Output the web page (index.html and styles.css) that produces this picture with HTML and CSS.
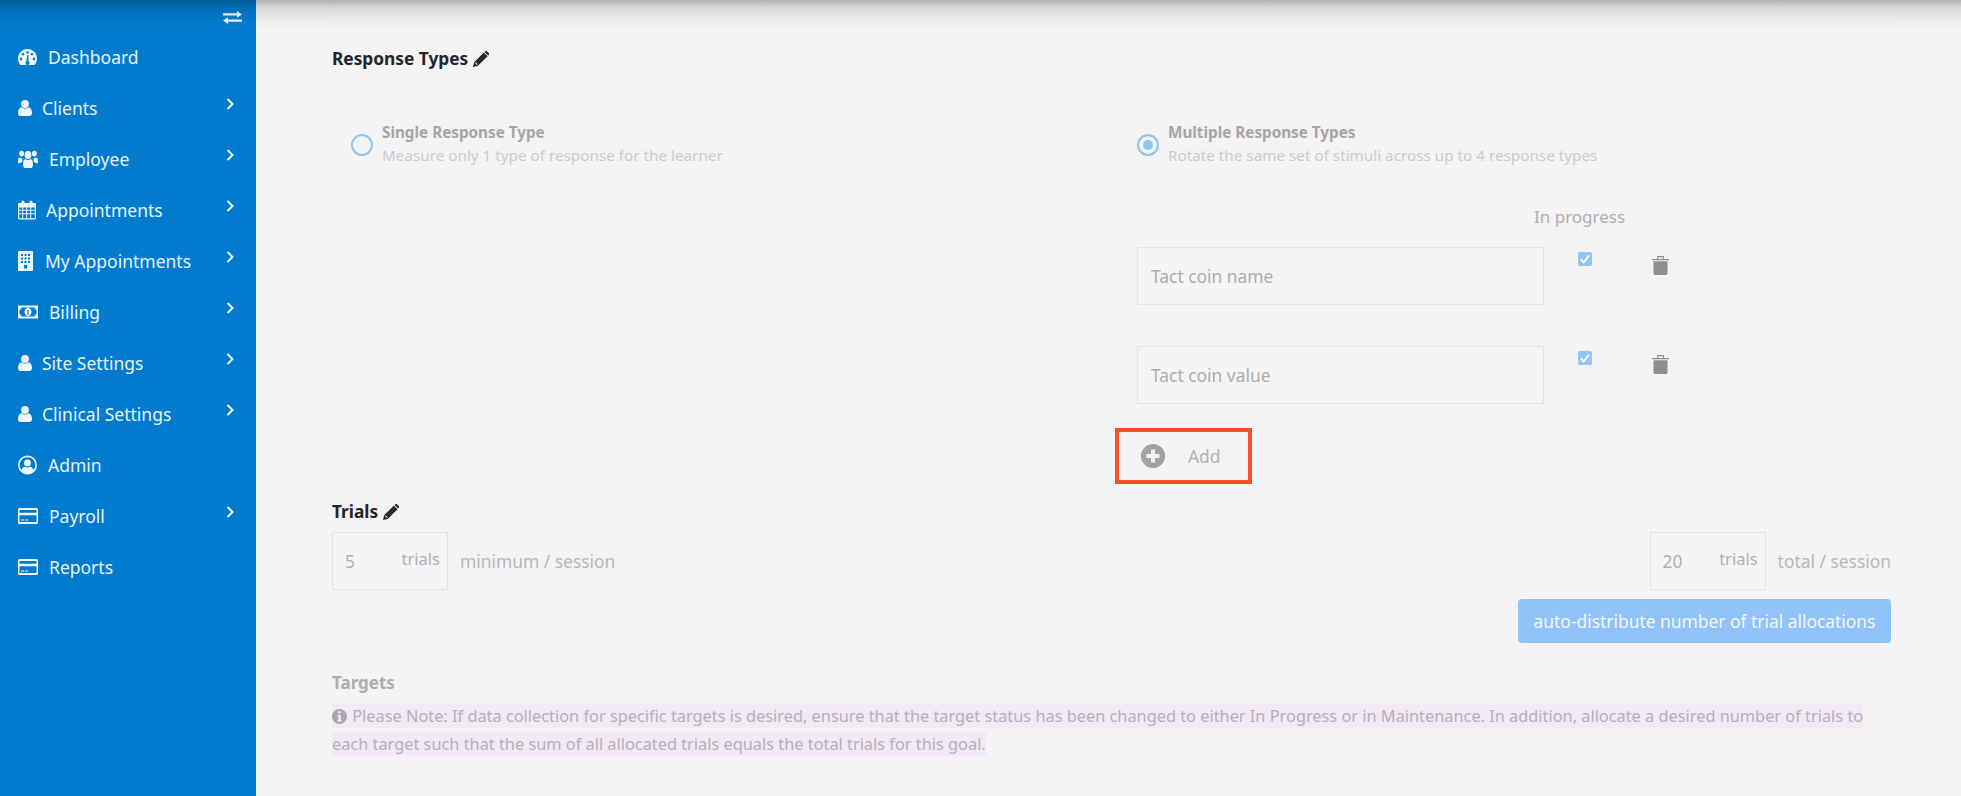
FILE: index.html
```html
<!DOCTYPE html>
<html lang="en">
<head>
<meta charset="utf-8">
<title>Response Types</title>
<link rel="stylesheet" href="styles.css">
</head>
<body>
<svg class="defs" aria-hidden="true">
  <symbol id="i-dash" viewBox="0 0 19 16"><path fill-rule="evenodd" d="M9.5 0C4.2 0 0 4.3 0 9.6c0 2.4.9 4.6 2.3 6.4h14.4c1.4-1.8 2.3-4 2.3-6.4C19 4.3 14.8 0 9.5 0zM9.5 2.2a1.3 1.3 0 1 1 0 2.6 1.3 1.3 0 0 1 0-2.6zM5 4a1.3 1.3 0 1 1 0 2.6A1.3 1.3 0 0 1 5 4zM14 4a1.3 1.3 0 1 1 0 2.6A1.3 1.3 0 0 1 14 4zM3 8.600a1.3 1.3 0 1 1 0 2.6 1.3 1.3 0 0 1 0-2.6zM16 8.600a1.3 1.3 0 1 1 0 2.6 1.3 1.3 0 0 1 0-2.6zM10.300 6l.3 6.300a2 2 0 1 1-2.200 0L9.300 6z"/></symbol>
  <symbol id="i-user" viewBox="0 0 14 16"><circle cx="7" cy="4" r="3.900"/><path d="M0 13c0-3.500 1.500-5.600 3.500-5.800C4.500 8 5.700 8.500 7 8.500s2.500-.5 3.500-1.300c2 .2 3.500 2.300 3.500 5.800 0 2-1 3-2.500 3h-9C1 16 0 15 0 13z"/></symbol>
  <symbol id="i-users" viewBox="0 0 20 15" preserveAspectRatio="none"><circle cx="3.600" cy="3" r="2.400"/><circle cx="16.400" cy="3" r="2.400"/><circle cx="10" cy="4.200" r="3.400"/><path d="M0 9.500C0 7.500.8 6.200 2 6.200c.8.500 1.600.8 2.600.7-.4 1-.4 2-.2 2.900-.9.200-1.700.6-2.200 1.200H1c-.6 0-1-.5-1-1.500zM20 9.500c0-2-.8-3.300-2-3.300-.8.500-1.600.8-2.600.7.400 1 .4 2 .2 2.900.9.200 1.700.6 2.200 1.200h1.200c.6 0 1-.5 1-1.500zM5 12c0-2.600 1-4.300 2.500-4.500.7.500 1.500.8 2.500.8s1.800-.3 2.500-.8C14 7.700 15 9.400 15 12c0 2-1 3-2.300 3H7.300C6 15 5 14 5 12z"/></symbol>
  <symbol id="i-cal" viewBox="0 0 18 19"><path fill-rule="evenodd" d="M1.200 2.500H3.500V1.500a1.500 1.500 0 0 1 3 0v1h5v-1a1.500 1.500 0 0 1 3 0v1h2.300C17.500 2.500 18 3 18 3.700v14.100c0 .7-.5 1.200-1.200 1.200H1.200C.5 19 0 18.500 0 17.800V3.700C0 3 .5 2.500 1.200 2.500zM1.200 7v2.200h3V7zM5.200 7v2.200h3V7zM9.200 7v2.200h3V7zM13.200 7v2.200h3.600V7zM1.200 10.200v2.600h3v-2.600zM5.200 10.200v2.600h3v-2.600zM9.200 10.200v2.600h3v-2.600zM13.200 10.200v2.600h3.600v-2.600zM1.200 13.800v3.900h3v-3.900zM5.200 13.800v3.900h3v-3.900zM9.200 13.800v3.900h3v-3.900zM13.200 13.800v3.900h3.600v-3.900z"/></symbol>
  <symbol id="i-bld" viewBox="0 0 15 20"><path fill-rule="evenodd" d="M.8 0h13.400c.4 0 .8.400.8.800v18.400c0 .4-.4.800-.8.800H.8c-.4 0-.8-.4-.8-.8V.8C0 .4.400 0 .8 0zM3 3v2h2V3zM6.500 3v2h2V3zM10 3v2h2V3zM3 6.500v2h2v-2zM6.500 6.500v2h2v-2zM10 6.500v2h2v-2zM3 10v2h2v-2zM6.500 10v2h2v-2zM10 10v2h2v-2zM6 14v3.500h3V14z"/></symbol>
  <symbol id="i-money" viewBox="0 0 20 13"><path fill-rule="evenodd" d="M0 0h20v13H0zM3.500 2C3.200 3.500 2.500 4.200 1.500 4.500v4c1 .3 1.700 1 2 2.500h13c.3-1.500 1-2.200 2-2.500v-4c-1-.3-1.700-1-2-2.500zM10 2.500c2 0 3.500 1.800 3.500 4s-1.500 4-3.500 4-3.500-1.800-3.500-4 1.500-4 3.500-4zM9 5v.8h.6v2.500H9V9h2.200v-.7h-.6V4.500h-.7z"/></symbol>
  <symbol id="i-ucircle" viewBox="0 0 19 19"><path fill-rule="evenodd" d="M9.500 0a9.500 9.500 0 1 1 0 19 9.500 9.500 0 0 1 0-19zM9.500 1.700a7.800 7.800 0 0 0-6 12.800c.6-1.800 2-3 3.500-3.200.7.500 1.500.8 2.500.8s1.800-.3 2.500-.8c1.500.2 2.900 1.400 3.500 3.200a7.800 7.800 0 0 0-6-12.800zM9.500 4a3.400 3.400 0 1 1 0 6.800 3.400 3.400 0 0 1 0-6.800z"/></symbol>
  <symbol id="i-card" viewBox="0 0 20 16"><path fill-rule="evenodd" d="M1.800 0h16.400C19.200 0 20 .8 20 1.800v12.400c0 1-.8 1.800-1.800 1.800H1.800C.8 16 0 15.200 0 14.200V1.800C0 .8.800 0 1.800 0zM1.500 2v2.800h17V2zM1.500 7.300v6.700h17V7.300zM3 11.400h3v1.200H3zM7 11.400h3v1.200H7z"/></symbol>
  <symbol id="i-pencil" viewBox="0 0 17 17"><path fill-rule="evenodd" d="M0 17l1.200-5L11.500 1.700l4 4L5 16zM2.200 12.800l2 2 .8-.6-2.200-2.200zM12.300 1l1-1c.4-.3.9-.3 1.200 0l2.500 2.500c.3.300.3.800 0 1.200l-1 1z"/></symbol>
  <symbol id="i-trash" viewBox="0 0 17 19"><path fill-rule="evenodd" d="M0 3h5V1c0-.6.400-1 1-1h5c.6 0 1 .4 1 1v2h5v1.300H0zM6 3h5V1.200H6zM1.500 5.200h14v12.300c0 .9-.6 1.500-1.400 1.500H2.900c-.8 0-1.400-.6-1.400-1.500z"/></symbol>
  <symbol id="i-plus" viewBox="0 0 24 24"><path fill-rule="evenodd" d="M12 0a12 12 0 1 1 0 24 12 12 0 0 1 0-24zM10 5.500v4.500H5.500v4H10v4.500h4V14h4.500v-4H14V5.500z"/></symbol>
  <symbol id="i-info" viewBox="0 0 14 14"><path fill-rule="evenodd" d="M7 0a7 7 0 1 1 0 14A7 7 0 0 1 7 0zM5.800 2.200v2h2.400v-2zM5 5.600v1.200h.9v3.400H5v1.400h4v-1.400h-.8V5.600z"/></symbol>
  <symbol id="i-ex" viewBox="0 0 19 13"><path d="M0 2.300h14V0l5 3.400-5 3.400V4.500H0zM19 8.500H5V6.200L0 9.600 5 13v-2.300h14z"/></symbol>
  <symbol id="i-chev" viewBox="0 0 8 12"><path d="M1.500 1l5 5-5 5" fill="none" stroke="currentColor" stroke-width="2"/></symbol>
  <symbol id="i-check" viewBox="0 0 14 14"><path d="M3 7.500l2.700 3L11 3.500" fill="none" stroke="currentColor" stroke-width="2"/></symbol>
</svg>

<div class="page">
  <div class="top-shadow"></div>

  <aside class="sidebar">
    <div class="toggle"><svg class="ic-ex"><use href="#i-ex"/></svg></div>
    <nav class="menu">
      <a class="item"><svg class="ic w19"><use href="#i-dash"/></svg><span class="lbl g11">Dashboard</span></a>
      <a class="item"><svg class="ic w14"><use href="#i-user"/></svg><span class="lbl g10">Clients</span><svg class="chev"><use href="#i-chev"/></svg></a>
      <a class="item"><svg class="ic w20 h18"><use href="#i-users"/></svg><span class="lbl g11">Employee</span><svg class="chev"><use href="#i-chev"/></svg></a>
      <a class="item"><svg class="ic w18"><use href="#i-cal"/></svg><span class="lbl g10">Appointments</span><svg class="chev"><use href="#i-chev"/></svg></a>
      <a class="item"><svg class="ic w15"><use href="#i-bld"/></svg><span class="lbl g12">My Appointments</span><svg class="chev"><use href="#i-chev"/></svg></a>
      <a class="item"><svg class="ic w20"><use href="#i-money"/></svg><span class="lbl g11">Billing</span><svg class="chev"><use href="#i-chev"/></svg></a>
      <a class="item"><svg class="ic w14"><use href="#i-user"/></svg><span class="lbl g10">Site Settings</span><svg class="chev"><use href="#i-chev"/></svg></a>
      <a class="item"><svg class="ic w14"><use href="#i-user"/></svg><span class="lbl g10">Clinical Settings</span><svg class="chev"><use href="#i-chev"/></svg></a>
      <a class="item"><svg class="ic w19"><use href="#i-ucircle"/></svg><span class="lbl g11">Admin</span></a>
      <a class="item"><svg class="ic w20"><use href="#i-card"/></svg><span class="lbl g11">Payroll</span><svg class="chev"><use href="#i-chev"/></svg></a>
      <a class="item"><svg class="ic w20"><use href="#i-card"/></svg><span class="lbl g11">Reports</span></a>
    </nav>
  </aside>

  <main class="main">
    <div class="prev-box"></div>

    <h2 class="heading first">Response Types <svg class="pencil"><use href="#i-pencil"/></svg></h2>

    <section class="radios">
      <div class="radio-opt">
        <span class="radio"></span>
        <div><div class="r-title">Single Response Type</div><div class="r-desc">Measure only 1 type of response for the learner</div></div>
      </div>
      <div class="radio-opt">
        <span class="radio on"></span>
        <div><div class="r-title">Multiple Response Types</div><div class="r-desc">Rotate the same set of stimuli across up to 4 response types</div></div>
      </div>
    </section>

    <section class="types">
      <div class="types-head">In progress</div>
      <div class="type-row">
        <div class="field">Tact coin name</div>
        <span class="check"><svg><use href="#i-check"/></svg></span>
        <svg class="trash"><use href="#i-trash"/></svg>
      </div>
      <div class="type-row">
        <div class="field">Tact coin value</div>
        <span class="check"><svg><use href="#i-check"/></svg></span>
        <svg class="trash"><use href="#i-trash"/></svg>
      </div>
    </section>

    <div class="add-wrap">
      <div class="add"><svg class="plus"><use href="#i-plus"/></svg><span>Add</span></div>
    </div>

    <h2 class="heading">Trials <svg class="pencil"><use href="#i-pencil"/></svg></h2>
    <div class="trials">
      <div class="trial-group">
        <div class="trial-box"><span class="t-val">5</span><span class="t-unit">trials</span></div>
        <span class="t-label">minimum / session</span>
      </div>
      <div class="trial-group">
        <div class="trial-box"><span class="t-val">20</span><span class="t-unit">trials</span></div>
        <span class="t-label">total / session</span>
      </div>
    </div>
    <div class="btn-row"><button class="btn" type="button">auto-distribute number of trial allocations</button></div>

    <h3 class="targets">Targets</h3>
    <p class="note"><span class="note-text"><svg class="info"><use href="#i-info"/></svg> Please Note: If data collection for specific targets is desired, ensure that the target status has been changed to either In Progress or in Maintenance. In addition, allocate a desired number of trials to each target such that the sum of all allocated trials equals the total trials for this goal.</span></p>
  </main>
</div>
</body>
</html>
```

FILE: styles.css
```css
* { box-sizing: border-box; }
html, body { margin: 0; height: 100%; }
body { font-family: "Noto Sans", "Open Sans", sans-serif; background: #f3f3f3; overflow: hidden; }
.defs { position: absolute; width: 0; height: 0; }

.page { display: flex; height: 796px; position: relative; }
.top-shadow {
  position: absolute; left: 0; right: 0; top: 0; height: 28px; z-index: 2;
  background: linear-gradient(to bottom, rgba(0,0,0,.27), rgba(0,0,0,.11) 30%, rgba(0,0,0,.03) 70%, rgba(0,0,0,0));
  pointer-events: none;
}

/* sidebar */
.sidebar { width: 256px; flex: none; background: #027bce; color: #e6f3fc; }
.toggle { height: 31px; display: flex; justify-content: flex-end; padding: 11px 14px 0 0; }
.ic-ex { width: 19px; height: 13px; fill: #f2f8fd; }
.item { display: flex; align-items: center; height: 51px; padding-left: 18px; font-size: 17.5px; }
.ic { height: 20px; fill: #eef7fd; flex: none; }
.h18 { height: 18px; }
.w14 { width: 14px; } .w15 { width: 15px; } .w18 { width: 18px; } .w19 { width: 19px; } .w20 { width: 20px; }
.g10 { margin-left: 10px; } .g11 { margin-left: 11px; } .g12 { margin-left: 12px; }
.chev { width: 8px; height: 12px; color: #eef7fd; margin-left: auto; margin-right: 22px; margin-bottom: 8px; flex: none; }

/* main */
.main { flex: 1; padding: 0 70px 0 76px; min-width: 0; }
.prev-box { height: 23px; border-left: 1px solid #eeeeee; border-bottom: 1px solid #eeeeee; }
.heading { margin: 16px 0 0; font-size: 17.3px; line-height: 24px; font-weight: 700; color: #23252a; display: flex; align-items: center; gap: 5px; }
.heading.first { margin-top: 24px; }
.pencil { width: 16px; height: 16px; fill: #26282c; }

.radios { display: grid; grid-template-columns: 786px 1fr; margin-top: 33px; padding-top: 16px; border-top: 1px solid #f1f1f1; }
.radio-opt { display: flex; align-items: center; gap: 9px; padding-left: 19px; }
.radio { width: 22px; height: 22px; border-radius: 50%; border: 2px solid #8fc6ec; flex: none; position: relative; top: 1px; }
.radio.on { background: #8fc6ec; box-shadow: inset 0 0 0 4px #f3f3f3; }
.r-title { font-size: 15.25px; line-height: 23px; font-weight: 700; color: #a6a6a6; }
.r-desc { font-size: 15.25px; line-height: 23px; color: #cbcbcb; }

.types { margin: 38px 0 0 805px; }
.types-head { padding-left: 397px; font-size: 17px; line-height: 24px; color: #b0b0b0; }
.type-row { display: flex; align-items: flex-start; height: 58px; margin-top: 18px; }
.type-row + .type-row { margin-top: 41px; }
.field { width: 407px; height: 58px; border: 1px solid #e3e3e3; background: #f4f4f4; display: flex; align-items: center; padding-left: 13px; font-size: 17.4px; color: #adadad; }
.check { width: 14px; height: 14px; margin: 5px 0 0 34px; border-radius: 2px; background: #93c3fb; color: #fff; flex: none; }
.check svg { display: block; width: 14px; height: 14px; }
.trash { width: 17px; height: 19px; margin: 9px 0 0 60px; fill: #8e8e8e; flex: none; }

.add-wrap { margin: 24px 0 0 783px; }
.add { width: 137px; height: 56px; border: 4px solid #f94f27; display: flex; align-items: center; padding-left: 22px; gap: 23px; font-size: 17.4px; color: #b2b2b2; }
.plus { width: 24px; height: 24px; fill: #a2a2a2; flex: none; }

.trials { display: flex; justify-content: space-between; margin-top: 8px; }
.trial-group { display: flex; align-items: center; gap: 12px; }
.trial-box { width: 116px; height: 58px; border: 1px solid #e3e3e3; background: #f4f4f4; display: flex; justify-content: space-between; align-items: center; padding: 0 7px 0 12px; font-size: 16.5px; color: #b0b0b0; }
.t-val { font-size: 17.4px; }
.t-unit { position: relative; top: -3px; }
.t-label { font-size: 17.4px; color: #b8b8b8; }
.btn-row { display: flex; justify-content: flex-end; margin-top: 9px; }
.btn { width: 373px; height: 44px; border: 0; border-radius: 4px; background: #91c3fa; color: #f1f7fe; font: 17.4px "Noto Sans", sans-serif; padding: 0; }

.targets { margin: 28px 0 0; font-size: 17px; line-height: 24px; font-weight: 700; color: #adadad; }
.note { margin: 7px 0 0; font-size: 16.33px; line-height: 28px; color: #b5b1b8; }
.note-text { background: #f1e9f5; padding: 1px 0; }
.info { width: 15px; height: 15px; fill: #a8a8a8; vertical-align: -2px; margin-right: 1px; }
```
